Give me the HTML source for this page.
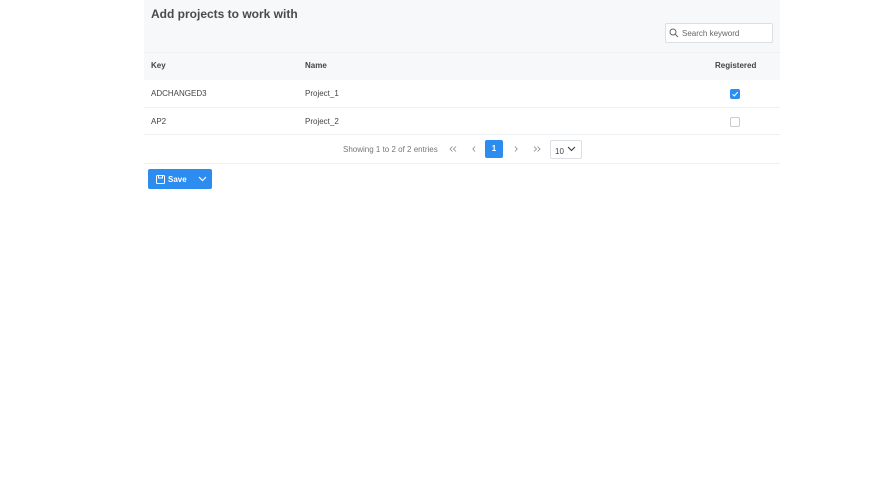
<!DOCTYPE html>
<html><head><style>
*{box-sizing:border-box;margin:0;padding:0}
body{width:870px;height:495px;background:#fff;font-family:"Liberation Sans",sans-serif;color:#444;position:relative;overflow:hidden}
.a{position:absolute}
.gray{left:144px;top:0;width:636px;height:80px;background:#f7f8fa}
.title{left:151px;top:7px;font-size:12px;font-weight:bold;color:#4a4a4a}
.search{left:665px;top:23px;width:108px;height:20px;background:#fff;border:1px solid #dcdfe3;border-radius:2px;font-size:8px;color:#666;padding:5px 0 0 16px}
.line{left:144px;width:636px;height:1px;background:#eef0f2}
.t{font-size:8px}
.th{font-weight:bold;font-size:8px;color:#444}
.cb{width:10px;height:10px;border-radius:2px}
.pg{font-size:8px;color:#777}
</style></head><body>
<div class="a gray"></div>
<div class="a title">Add projects to work with</div>
<div class="a search">Search keyword</div>
<svg class="a" style="left:669px;top:28px" width="10" height="10" viewBox="0 0 10 10"><circle cx="4" cy="4" r="3" fill="none" stroke="#666" stroke-width="1"/><path d="M6.2 6.2L9 9" stroke="#666" stroke-width="1"/></svg>
<div class="a line" style="top:52px"></div>
<div class="a th" style="left:151px;top:61px">Key</div>
<div class="a th" style="left:305px;top:61px">Name</div>
<div class="a th" style="left:715px;top:61px">Registered</div>
<div class="a t" style="left:151px;top:89px">ADCHANGED3</div>
<div class="a t" style="left:305px;top:89px">Project_1</div>
<div class="a cb" style="left:730px;top:89px;background:#2d8cf0"></div>
<svg class="a" style="left:730px;top:89px" width="10" height="10"><path d="M2.5 5.2L4.3 7L7.8 3" stroke="#fff" stroke-width="1" fill="none"/></svg>
<div class="a line" style="top:107px"></div>
<div class="a t" style="left:151px;top:117px">AP2</div>
<div class="a t" style="left:305px;top:117px">Project_2</div>
<div class="a cb" style="left:730px;top:117px;border:1px solid #ccc"></div>
<div class="a line" style="top:134px"></div>
<div class="a pg" style="left:343px;top:145px">Showing 1 to 2 of 2 entries</div>
<svg class="a" style="left:449px;top:146px" width="8" height="6"><path d="M3.5 0.5L1 3L3.5 5.5M7 0.5L4.5 3L7 5.5" stroke="#888" stroke-width="0.8" fill="none"/></svg>
<svg class="a" style="left:472px;top:146px" width="4" height="6"><path d="M3 0.5L0.8 3L3 5.5" stroke="#888" stroke-width="0.8" fill="none"/></svg>
<div class="a" style="left:485px;top:140px;width:18px;height:18px;background:#2d8cf0;border-radius:2px;color:#fff;font-size:8px;font-weight:bold;text-align:center;line-height:18px">1</div>
<svg class="a" style="left:514px;top:146px" width="4" height="6"><path d="M1 0.5L3.2 3L1 5.5" stroke="#888" stroke-width="0.8" fill="none"/></svg>
<svg class="a" style="left:533px;top:146px" width="8" height="6"><path d="M1 0.5L3.5 3L1 5.5M4.5 0.5L7 3L4.5 5.5" stroke="#888" stroke-width="0.8" fill="none"/></svg>
<div class="a" style="left:550px;top:140px;width:32px;height:19px;border:1px solid #dcdfe3;border-radius:2px;font-size:8px;padding:6px 0 0 4px">10</div>
<svg class="a" style="left:567px;top:146px" width="9" height="6"><path d="M1 1L4.5 4.5L8 1" stroke="#333" stroke-width="1" fill="none"/></svg>
<div class="a line" style="top:163px"></div>
<div class="a" style="left:148px;top:169px;width:64px;height:20px;background:#2d8cf0;border-radius:2px"></div>
<svg class="a" style="left:156px;top:175px" width="9" height="9"><rect x="0.5" y="0.5" width="8" height="8" rx="1" fill="none" stroke="#fff"/><rect x="2.5" y="0.5" width="4" height="2.5" fill="none" stroke="#fff"/></svg>
<div class="a" style="left:168px;top:175px;color:#fff;font-size:8px;font-weight:bold">Save</div>
<svg class="a" style="left:198px;top:176px" width="9" height="6"><path d="M1 1L4.5 4.5L8 1" stroke="#fff" stroke-width="1.2" fill="none"/></svg>
</body></html>
